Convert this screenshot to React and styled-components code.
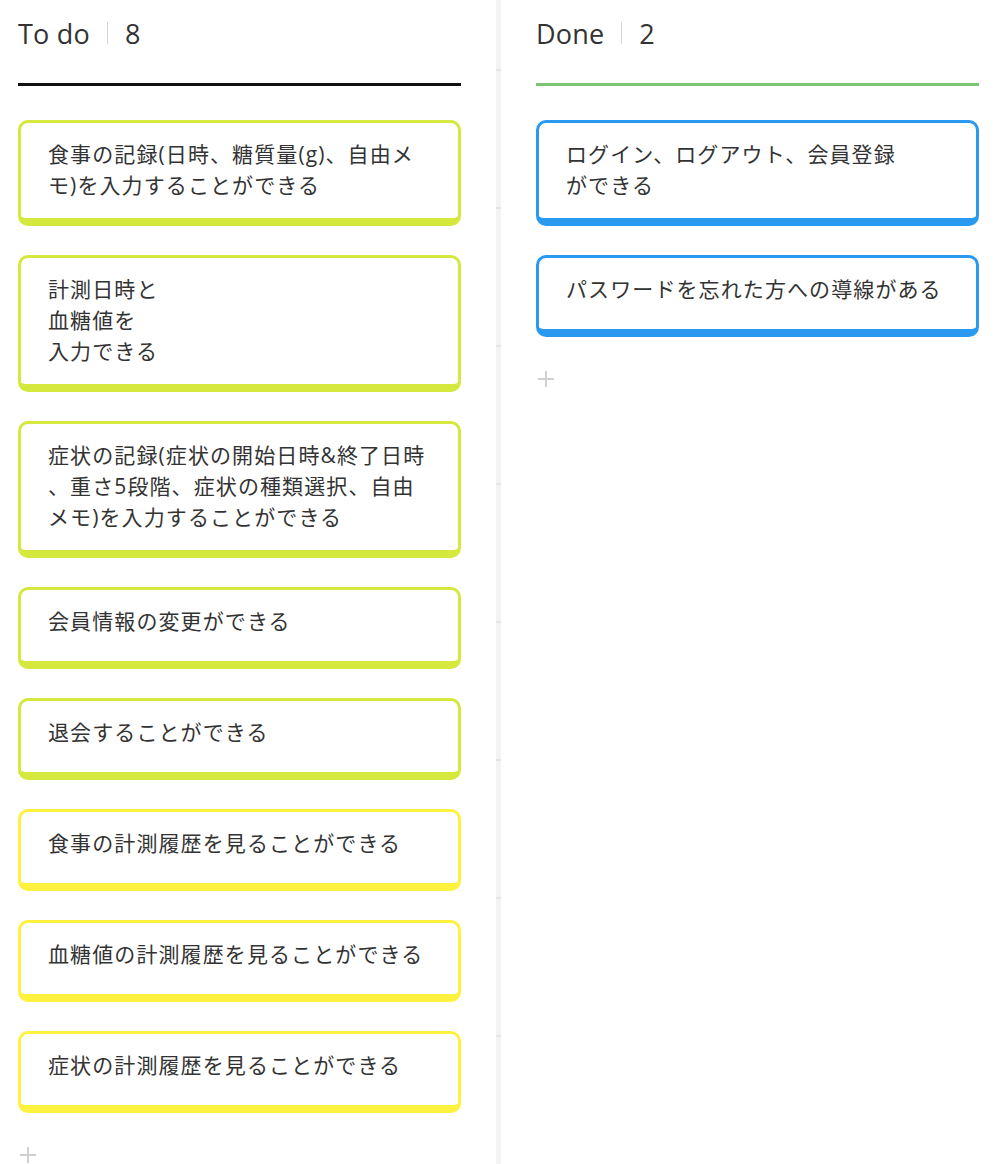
import React from 'react'
import styled, { createGlobalStyle } from 'styled-components'

const GlobalStyle = createGlobalStyle`
  body {
    margin: 0;
    background: #fff;
    font-family: "Open Sans", "Noto Sans CJK JP", sans-serif;
    color: #333;
  }
`

const todo = [
  { color: 'lime', text: '食事の記録(日時、糖質量(g)、自由メモ)を入力することができる' },
  { color: 'lime', text: '計測日時と\n血糖値を\n入力できる' },
  { color: 'lime', text: '症状の記録(症状の開始日時&終了日時、重さ5段階、症状の種類選択、自由メモ)を入力することができる' },
  { color: 'lime', text: '会員情報の変更ができる' },
  { color: 'lime', text: '退会することができる' },
  { color: 'yellow', text: '食事の計測履歴を見ることができる' },
  { color: 'yellow', text: '血糖値の計測履歴を見ることができる' },
  { color: 'yellow', text: '症状の計測履歴を見ることができる' },
]

const done = [
  { color: 'blue', text: 'ログイン、ログアウト、会員登録\nができる' },
  { color: 'blue', text: 'パスワードを忘れた方への導線がある' },
]

const colors = {
  lime: '#d4e83e',
  yellow: '#fff23f',
  blue: '#2a9af0',
}

function Column({ title, line, items }) {
  return (
    <Col>
      <Header>
        <Title>{title}</Title>
        <Sep />
        <Count>{items.length}</Count>
      </Header>
      <Rule $color={line} />
      <Cards>
        {items.map((it, i) => (
          <Card key={i} $color={colors[it.color]}>{it.text}</Card>
        ))}
      </Cards>
      <Plus />
    </Col>
  )
}

export default function App() {
  return (
    <>
      <GlobalStyle />
      <Board>
        <Column title="To do" line="#111" items={todo} />
        <Divider />
        <Column title="Done" line="#7cc576" items={done} />
      </Board>
    </>
  )
}

const Board = styled.div`
  display: flex;
  padding-left: 18px;
  min-height: 1164px;
  box-sizing: border-box;
`

const Col = styled.div`
  width: 443px;
  display: flex;
  flex-direction: column;
`

const Divider = styled.div`
  width: 5px;
  margin: 0 35px;
  background-color: #f3f3f3;
  background-image: repeating-linear-gradient(
    to bottom,
    transparent 0,
    transparent 69px,
    #e6e6e6 69px,
    #e6e6e6 71px,
    transparent 71px,
    transparent 138px
  );
`

const Header = styled.div`
  display: flex;
  align-items: center;
  height: 40px;
  margin-top: 13px;
  font-size: 27px;
  color: #333;
`

const Title = styled.span`
  letter-spacing: 0.2px;
`

const Sep = styled.span`
  width: 1px;
  height: 22px;
  background: #d6d6d6;
  margin: 0 17px 0 17px;
`

const Count = styled.span``

const Rule = styled.div`
  height: 3px;
  margin-top: 30px;
  background: ${p => p.$color};
`

const Cards = styled.div`
  display: flex;
  flex-direction: column;
  gap: 29px;
  margin-top: 34px;
`

const Card = styled.div`
  box-sizing: border-box;
  min-height: 82px;
  padding: 16px 29px 17px 27px;
  border: 3px solid ${p => p.$color};
  border-bottom-width: 8px;
  border-radius: 10px;
  background: #fff;
  font-size: 21px;
  letter-spacing: 1.1px;
  line-height: 31px;
  color: #333;
  white-space: pre-line;
  word-break: break-all;
  line-break: anywhere;
`

const Plus = styled.div`
  position: relative;
  width: 16px;
  height: 16px;
  margin: 34px 0 0 2px;
  &::before,
  &::after {
    content: '';
    position: absolute;
    background: #d0d0d0;
  }
  &::before {
    left: 7px;
    top: 0;
    width: 2px;
    height: 16px;
  }
  &::after {
    top: 7px;
    left: 0;
    width: 16px;
    height: 2px;
  }
`
